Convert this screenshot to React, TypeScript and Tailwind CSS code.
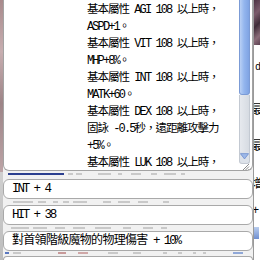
import React from "react";

const lines = [
  "基本屬性 AGI 108 以上時，",
  "ASPD+1。",
  "基本屬性 VIT 108 以上時，",
  "MHP+8%。",
  "基本屬性 INT 108 以上時，",
  "MATK+60。",
  "基本屬性 DEX 108 以上時，",
  "固詠 -0.5秒，遠距離攻擊力",
  "+5%。",
  "基本屬性 LUK 108 以上時，",
];

const CJK = /([\u3000-\u303f\u3400-\u9fff\uff00-\uffef]+)/;

function Runs({ text, big }: { text: string; big?: boolean }) {
  const parts = text.split(CJK).filter((p) => p.length > 0);
  return (
    <>
      {parts.map((p, i) =>
        CJK.test(p) ? (
          <span
            key={i}
            className={
              big
                ? "text-[12px] tracking-[-0.7px]"
                : "text-[11.5px] tracking-[-1px]"
            }
          >
            {p}
          </span>
        ) : (
          <span
            key={i}
            className={
              big
                ? "text-[12.5px] tracking-[-2.1px]"
                : "text-[12px] tracking-[-1.9px]"
            }
          >
            {p.replace(/ /g, "\u00a0")}
          </span>
        )
      )}
    </>
  );
}

function Dashes({ items }: { items: [number, number, string?][] }) {
  return (
    <div className="relative h-[2px] w-full">
      {items.map(([x, w, c], i) => (
        <div
          key={i}
          className="absolute top-0 h-[2px]"
          style={{ left: x, width: w, background: c || "#c9c9c9" }}
        />
      ))}
    </div>
  );
}

function Row({ children }: { children: React.ReactNode }) {
  return (
    <div className="h-[20px] shrink-0 rounded-[6px] border border-[#a9a9a9] bg-white pl-[8px] flex items-center leading-none text-black whitespace-nowrap overflow-hidden">
      {children}
    </div>
  );
}

export default function App() {
  return (
    <div className="w-[260px] h-[260px] overflow-hidden flex bg-[#f1f1f1] font-['Liberation_Mono','Noto_Sans_CJK_TC',monospace]">
      {/* left textured strip */}
      <div className="w-[3px] shrink-0 flex flex-col">
        <div className="h-[172px] bg-[linear-gradient(180deg,#a88a8c,#c7aeb0_30%,#9d8487_60%,#bca4a6)]" />
        <div className="flex-1 bg-[linear-gradient(180deg,#cfcfcf,#bdbdbd)]" />
      </div>

      {/* main column */}
      <div className="w-[250px] shrink-0 flex flex-col">
        {/* description box */}
        <div className="h-[171px] shrink-0 flex border border-t-0 border-[#a3a3a3] rounded-b-[6px] bg-white overflow-hidden">
          <div className="flex-1 pl-[83px] mt-[1px] leading-[17px] text-black whitespace-nowrap">
            {lines.map((l, i) => (
              <div key={i} className="h-[17px]">
                <Runs text={l} />
              </div>
            ))}
          </div>
          {/* scrollbar */}
          <div className="w-[11px] mr-[2px] shrink-0 flex flex-col">
            <div className="h-[95px] shrink-0 rounded-b-[3px] border border-t-0 border-[#7b9bd6] bg-[linear-gradient(90deg,#b9d0f5,#94b6ee_45%,#7fa3e3)]" />
            <div className="flex-1 border-x border-[#c3c9d2] bg-[linear-gradient(90deg,#e6e9ee,#d6dbe2)]" />
            <div className="h-[12px] shrink-0 flex items-start justify-center border-x border-b border-[#c3c9d2] rounded-b-[3px] bg-[#dde2e9]">
              <svg width="11" height="9" viewBox="0 0 11 9">
                <path d="M0.5 1 L10.5 1 L5.5 7.5 Z" fill="#9db8e8" stroke="#6f90cf" strokeWidth="1" />
              </svg>
            </div>
            <div className="h-[6px] shrink-0 flex justify-end">
              <svg width="8" height="6" viewBox="0 0 8 6">
                <path d="M7 0 L1 6 M7 2.5 L3.5 6 M7 5 L6 6" stroke="#8a8a8a" strokeWidth="1" />
              </svg>
            </div>
          </div>
        </div>

        {/* gap 1 */}
        <div className="h-[8px] shrink-0 pt-[2px]">
          <Dashes
            items={[
              [5, 56, "#2b3f8f"],
              [65, 5],
              [73, 6],
              [95, 13],
              [115, 4],
              [128, 10],
              [148, 6],
              [161, 12],
              [178, 4],
            ]}
          />
        </div>

        <Row>
          <Runs text="INT + 4" big />
        </Row>

        <div className="h-[6px] shrink-0 pt-[2px]">
          <Dashes
            items={[
              [10, 20],
              [35, 8],
              [50, 5],
              [60, 6],
              [70, 14],
              [100, 8],
              [115, 12],
              [135, 10],
              [160, 6],
            ]}
          />
        </div>

        <Row>
          <Runs text="HIT + 38" big />
        </Row>

        <div className="h-[6px] shrink-0 pt-[2px]">
          <Dashes
            items={[
              [8, 18],
              [30, 14],
              [52, 10],
              [70, 12],
              [92, 16],
              [120, 8],
              [140, 10],
              [158, 6],
            ]}
          />
        </div>

        <Row>
          <Runs text="對首領階級魔物的物理傷害" big />
          <Runs text=" + 10%" big />
        </Row>

        <div className="h-[5px] shrink-0 pt-[1px]">
          <Dashes
            items={[
              [2, 4, "#5a78c0"],
              [10, 8],
              [55, 8, "#c89a9a"],
              [75, 10, "#d0a8a8"],
              [105, 10],
              [130, 8],
              [160, 4],
              [175, 4],
              [190, 3],
              [200, 3],
              [230, 10, "#90a8d8"],
            ]}
          />
        </div>
        <div className="flex-1 rounded-t-[6px] border border-b-0 border-[#a9a9a9] bg-white" />
      </div>

      {/* right partial panel */}
      <div className="flex-1 flex flex-col border-l border-[#9a9a9a] bg-white overflow-hidden text-[12px] leading-none text-black">
        <div className="h-[45px] shrink-0 bg-[linear-gradient(135deg,#4d3343,#7a5a6a_30%,#3f2c38_55%,#8a6b78_80%,#5b4050)]" />
        <div className="h-[18px]" />
        <div className="h-[10px] pl-[1px] text-[10px]">d</div>
        <div className="h-[32px]" />
        <div className="h-[14px] -ml-[3px]">最</div>
        <div className="h-[22px]" />
        <div className="h-[14px] -ml-[3px]">最</div>
        <div className="h-[24px]" />
        <div className="h-[14px] -ml-[3px]">增</div>
        <div className="h-[12px]" />
        <div className="h-[14px] -ml-[2px]">+</div>
        <div className="h-[8px]" />
        <div className="h-[12px] w-[5px] bg-[linear-gradient(180deg,#b9cdee,#6f8fd0)]" />
      </div>
    </div>
  );
}
